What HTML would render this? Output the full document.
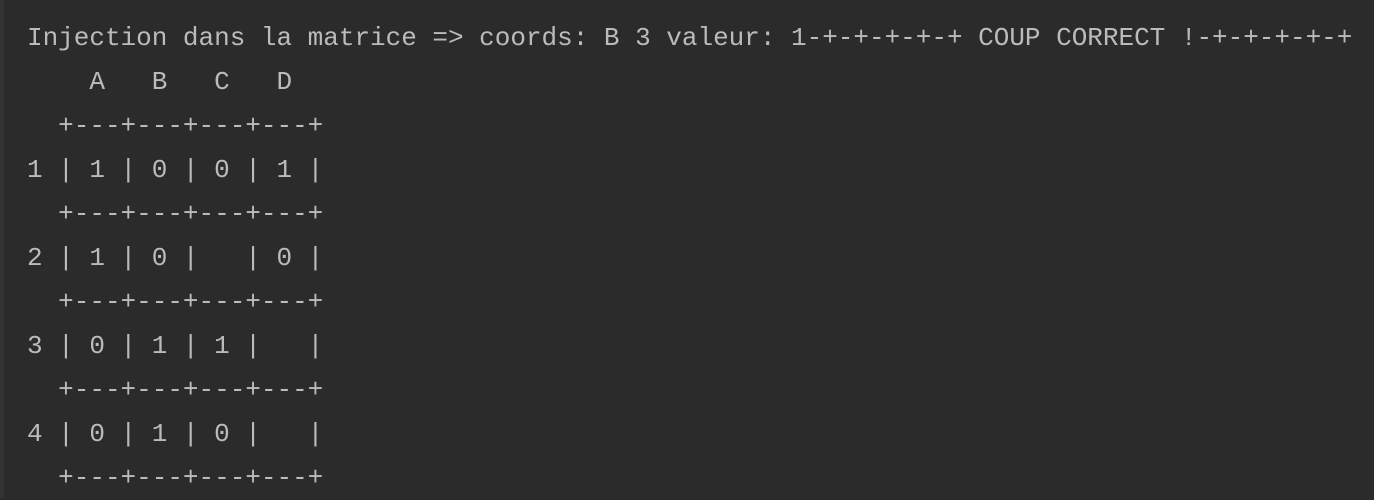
<!DOCTYPE html>
<html><head><style>
html,body{margin:0;padding:0;background:#2b2b2b;width:1374px;height:498px;overflow:hidden}
.l{position:absolute;left:0;top:0;width:4px;height:498px;background:#313335}
pre{position:absolute;left:27px;top:16px;margin:0;font-family:"Liberation Mono",monospace;font-size:26px;line-height:44px;color:#bbbbbb;letter-spacing:-0.01px}
</style></head><body><div class="l"></div><pre>Injection dans la matrice => coords: B 3 valeur: 1-+-+-+-+-+ COUP CORRECT !-+-+-+-+-+
    A   B   C   D
  +---+---+---+---+
1 | 1 | 0 | 0 | 1 |
  +---+---+---+---+
2 | 1 | 0 |   | 0 |
  +---+---+---+---+
3 | 0 | 1 | 1 |   |
  +---+---+---+---+
4 | 0 | 1 | 0 |   |
  +---+---+---+---+</pre></body></html>
